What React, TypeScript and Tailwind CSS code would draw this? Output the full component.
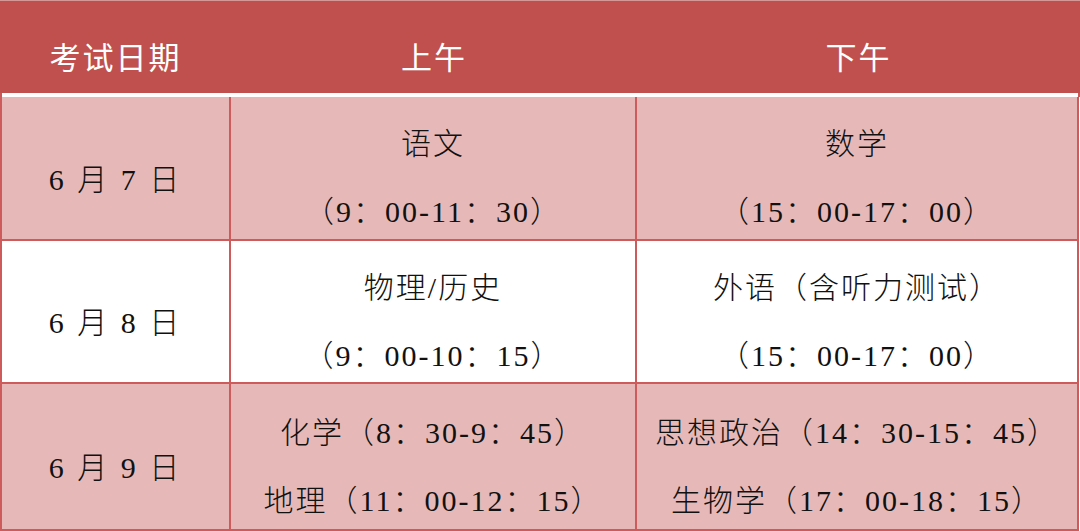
import React from "react";

const body = "font-['Liberation_Serif','Noto_Sans_CJK_SC',serif] text-[30px] tracking-[2px] text-[#111] font-light";

function Cell({ lines, bg }: { lines: string[]; bg: string }) {
  return (
    <div className={`${bg} flex flex-col items-center justify-center pt-[20px] ${body}`}>
      {lines.map((l, i) => (
        <div key={i} className="h-[68px] leading-[68px] whitespace-nowrap">
          {l}
        </div>
      ))}
    </div>
  );
}

export default function App() {
  const rows = [
    { date: "6 月 7 日", am: ["语文", "（9：00-11：30）"], pm: ["数学", "（15：00-17：00）"], bg: "bg-[#e6b9b8]" },
    { date: "6 月 8 日", am: ["物理/历史", "（9：00-10：15）"], pm: ["外语（含听力测试）", "（15：00-17：00）"], bg: "bg-white" },
    { date: "6 月 9 日", am: ["化学（8：30-9：45）", "地理（11：00-12：15）"], pm: ["思想政治（14：30-15：45）", "生物学（17：00-18：15）"], bg: "bg-[#e6b9b8]" },
  ];
  return (
    <div className="w-[1080px] h-[531px] bg-white overflow-hidden">
      <div className="h-[93px] bg-[#c0504d] border-t border-[#d69896] grid grid-cols-[231px_406px_443px] text-white font-['Noto_Sans_CJK_SC',sans-serif] text-[31px] font-normal tracking-[2px]">
        <div className="flex items-center justify-center pt-[18px]">考试日期</div>
        <div className="flex items-center justify-center pt-[18px]">上午</div>
        <div className="flex items-center justify-center pt-[18px]">下午</div>
      </div>
      <div className="h-[4px] bg-white border-l-2 border-r-2 border-[#c95858]" />
      <div className="grid grid-cols-[227px_404px_440px] grid-rows-[142px_141px_145px] gap-[2px] px-[2px] pb-[2px] bg-[#cd5b5b] w-[1079px]">
        {rows.map((r, i) => (
          <React.Fragment key={i}>
            <div className={`${r.bg} flex items-center justify-center pt-[22px] ${body} tracking-[3px]`}>
              <span className="whitespace-pre">{r.date}</span>
            </div>
            <Cell lines={r.am} bg={r.bg} />
            <Cell lines={r.pm} bg={r.bg} />
          </React.Fragment>
        ))}
      </div>
    </div>
  );
}
